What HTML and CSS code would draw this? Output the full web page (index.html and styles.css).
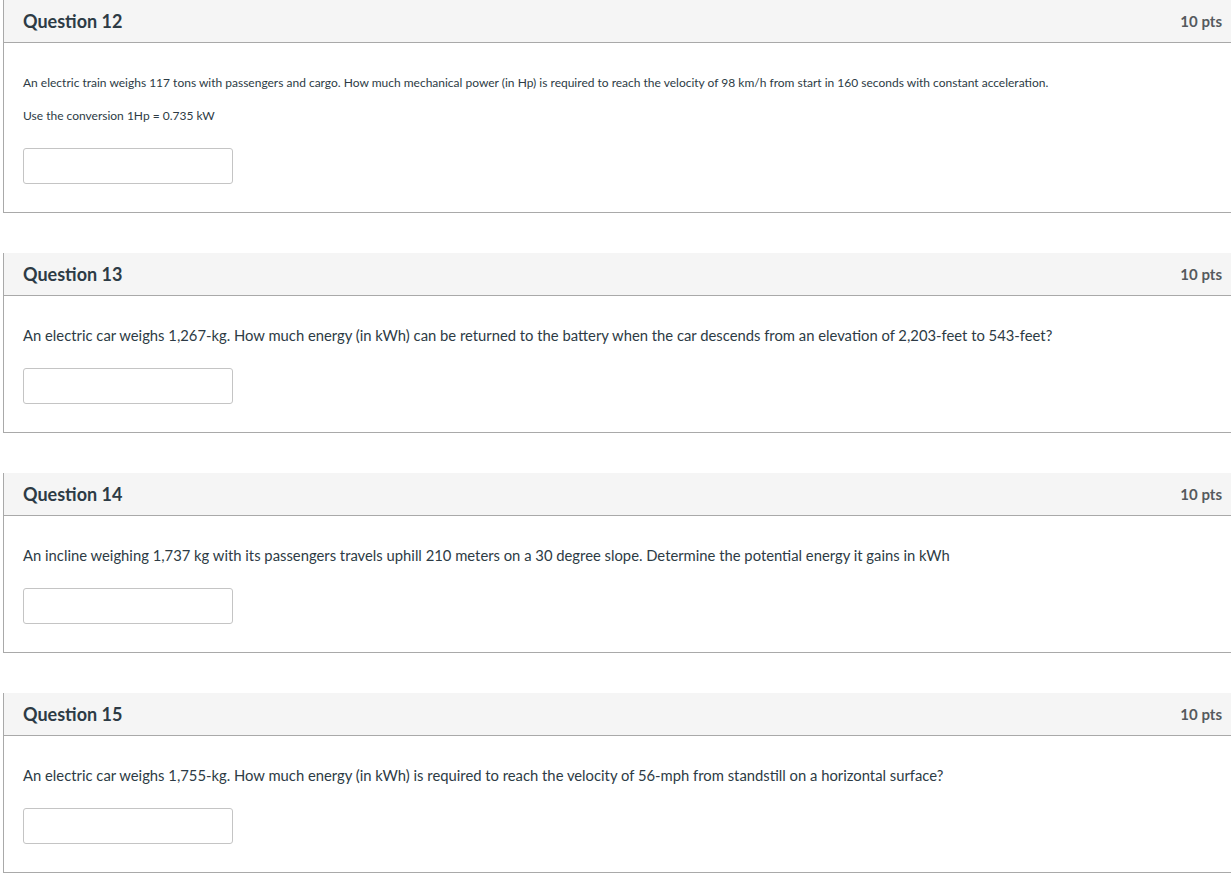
FILE: index.html
```html
<!DOCTYPE html>
<html lang="en">
<head>
<meta charset="utf-8">
<title>Quiz</title>
<link rel="stylesheet" href="styles.css">
</head>
<body>
<div class="quiz">
  <div class="question q-first">
    <div class="q-header">
      <span class="q-name">Question 12</span>
      <span class="q-pts">10 pts</span>
    </div>
    <div class="q-body">
      <p class="small-text first">An electric train weighs 117 tons with passengers and cargo. How much mechanical power (in Hp) is required to reach the velocity of 98 km/h from start in 160 seconds with constant acceleration.</p>
      <p class="small-text second">Use the conversion 1Hp = 0.735 kW</p>
      <input class="answer" type="text">
    </div>
  </div>

  <div class="question">
    <div class="q-header">
      <span class="q-name">Question 13</span>
      <span class="q-pts">10 pts</span>
    </div>
    <div class="q-body">
      <p class="text">An electric car weighs 1,267-kg. How much energy (in kWh) can be returned to the battery when the car descends from an elevation of 2,203-feet to 543-feet?</p>
      <input class="answer" type="text">
    </div>
  </div>

  <div class="question">
    <div class="q-header">
      <span class="q-name">Question 14</span>
      <span class="q-pts">10 pts</span>
    </div>
    <div class="q-body">
      <p class="text">An incline weighing 1,737 kg with its passengers travels uphill 210 meters on a 30 degree slope. Determine the potential energy it gains in kWh</p>
      <input class="answer" type="text">
    </div>
  </div>

  <div class="question">
    <div class="q-header">
      <span class="q-name">Question 15</span>
      <span class="q-pts">10 pts</span>
    </div>
    <div class="q-body">
      <p class="text">An electric car weighs 1,755-kg. How much energy (in kWh) is required to reach the velocity of 56-mph from standstill on a horizontal surface?</p>
      <input class="answer" type="text">
    </div>
  </div>
</div>
</body>
</html>
```

FILE: styles.css
```css
html, body {
  margin: 0;
  padding: 0;
  background: #ffffff;
  overflow: hidden;
}

body {
  font-family: Lato, "Open Sans", "Liberation Sans", sans-serif;
  color: #2d3b45;
}

.quiz {
  padding-left: 3px;
  display: flex;
  flex-direction: column;
  gap: 40px;
}

.question {
  border-left: 1px solid #a9a9a9;
  border-bottom: 1px solid #a9a9a9;
}

.q-header {
  height: 43px;
  box-sizing: border-box;
  background: #f5f5f5;
  border-bottom: 1px solid #a9a9a9;
  display: flex;
  align-items: center;
  justify-content: space-between;
  padding: 0 9px 0 19px;
}

.q-name {
  font-size: 18px;
  font-weight: 700;
  color: #2d3b45;
}

.q-pts {
  font-size: 15px;
  font-weight: 700;
  color: #555a5e;
}

.q-body {
  padding: 0 19px 28px;
  display: flex;
  flex-direction: column;
  align-items: flex-start;
}

.text {
  margin: 29px 0 23px;
  font-size: 14.8px;
  line-height: 20px;
}

.small-text {
  font-size: 12px;
  line-height: 16px;
  margin: 0;
}

.small-text.first {
  margin-top: 32px;
}

.small-text.second {
  margin-top: 17px;
  margin-bottom: 24px;
}

.answer {
  width: 210px;
  height: 36px;
  box-sizing: border-box;
  border: 1px solid #c4c4c4;
  border-radius: 3px;
  margin: 0;
  background: #fff;
}
```
